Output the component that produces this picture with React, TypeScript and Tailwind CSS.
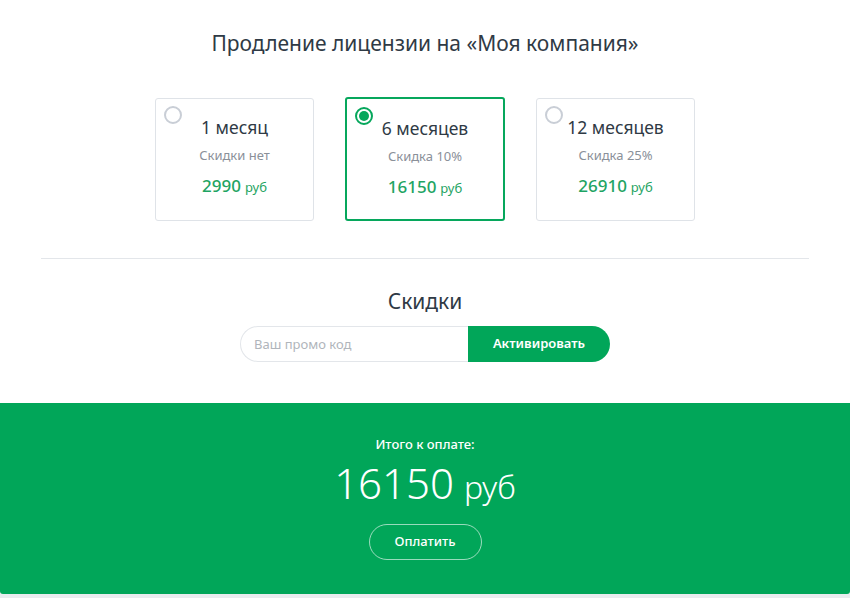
import React from "react";

const plans = [
  { title: "1 месяц", sub: "Скидки нет", price: "2990", active: false },
  { title: "6 месяцев", sub: "Скидка 10%", price: "16150", active: true },
  { title: "12 месяцев", sub: "Скидка 25%", price: "26910", active: false },
];

export default function App() {
  return (
    <div
      className="w-[850px] h-[598px] bg-[#e9ecef] flex flex-col overflow-hidden"
      style={{ fontFamily: "'Noto Sans', 'Open Sans', sans-serif" }}
    >
      <div className="bg-white flex flex-col items-center">
        <h1 className="mt-[29px] text-[21px] leading-[28px] text-[#2f3a45] font-normal">
          Продление лицензии на «Моя компания»
        </h1>
        <div className="mt-[40px] flex gap-[31px]">
          {plans.map((p) => (
            <div
              key={p.title}
              className={
                p.active
                  ? "relative w-[160px] h-[124px] rounded-[3px] border-2 border-[#06a75c] flex flex-col items-center"
                  : "relative w-[159px] h-[123px] rounded-[3px] border border-[#dfe3e8] flex flex-col items-center mt-[1px]"
              }
            >
              <div
                className={
                  p.active
                    ? "absolute left-[8px] top-[8px] w-[18px] h-[18px] rounded-full border-2 border-[#06a75c] flex items-center justify-center"
                    : "absolute left-[8px] top-[7px] w-[18px] h-[18px] rounded-full border-2 border-[#c9ced6]"
                }
              >
                {p.active && <div className="w-[10px] h-[10px] rounded-full bg-[#06a75c]" />}
              </div>
              <div className={p.active ? "mt-[17px] text-[17.5px] leading-[24px] text-[#2f3a45]" : "mt-[16px] text-[17.5px] leading-[24px] text-[#2f3a45]"}>
                {p.title}
              </div>
              <div className="mt-[8px] text-[13px] leading-[16px] text-[#8a9099]">{p.sub}</div>
              <div className="mt-[12px] text-[#1fa463] leading-[22px]">
                <span className="text-[17px] font-medium">{p.price}</span>
                <span className="text-[13px] ml-[4px]">руб</span>
              </div>
            </div>
          ))}
        </div>
        <div className="mt-[37px] w-[768px] h-px bg-[#e3e6ea]" />
        <h2 className="mt-[28px] text-[21px] leading-[28px] text-[#2f3a45] font-normal">Скидки</h2>
        <div className="mt-[11px] mb-[41px] flex h-[36px]">
          <input
            placeholder="Ваш промо код"
            className="w-[228px] h-full rounded-l-full border border-[#e3e6ea] border-r-0 pl-[13px] text-[13px] text-[#2f3a45] placeholder:text-[#b0b5bb] outline-none"
          />
          <button className="w-[142px] h-full rounded-r-full bg-[#01a659] text-white text-[13px] font-semibold">
            Активировать
          </button>
        </div>
      </div>
      <div className="bg-[#01a659] h-[191px] rounded-b-[3px] flex flex-col items-center text-white">
        <div className="mt-[32px] text-[13px] leading-[18px] font-medium">Итого к оплате:</div>
        <div className="mt-[6px] leading-[48px] font-light">
          <span className="text-[42px]">16150</span>
          <span className="text-[32px] ml-[10px]">руб</span>
        </div>
        <button className="mt-[7px] w-[113px] h-[36px] rounded-full border border-white/60 text-[13px] font-medium">
          Оплатить
        </button>
      </div>
    </div>
  );
}
